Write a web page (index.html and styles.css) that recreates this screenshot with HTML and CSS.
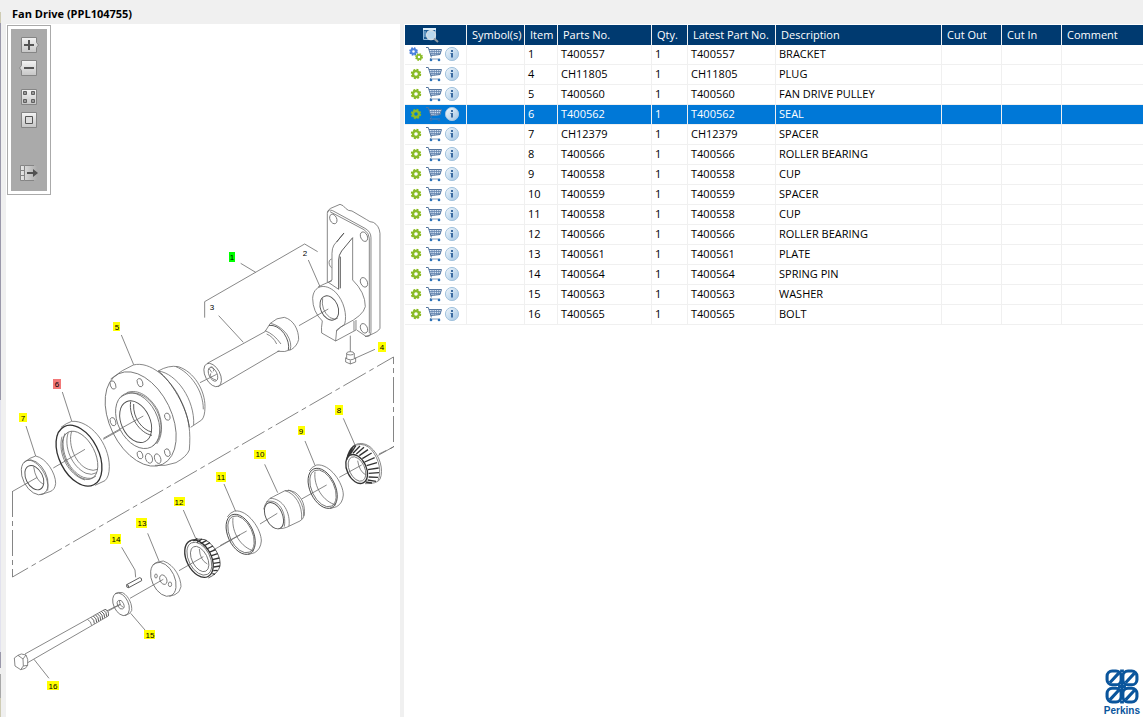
FILE: index.html
```html
<!DOCTYPE html>
<html lang="en">
<head>
<meta charset="utf-8">
<title>Fan Drive (PPL104755)</title>
<link rel="stylesheet" href="styles.css">
</head>
<body>
<svg class="defs" aria-hidden="true">
  <defs>
    <linearGradient id="tool" x1="0" y1="0" x2="0" y2="1"><stop offset="0" stop-color="#f4f4f4"/><stop offset="1" stop-color="#c6c6c6"/></linearGradient>
    <linearGradient id="fade" x1="0" y1="0" x2="1" y2="0"><stop offset="0" stop-color="#e6e6e6"/><stop offset="1" stop-color="#ababab"/></linearGradient>
    <linearGradient id="ball" x1="0" y1="0" x2="1" y2="1"><stop offset="0" stop-color="#f4f9fd"/><stop offset="1" stop-color="#9fc3e2"/></linearGradient>
  </defs>
  <symbol id="gear" viewBox="0 0 16 16">
    <circle cx="8" cy="8" r="4.2" fill="none" stroke="#86b817" stroke-width="2" stroke-dasharray="1.9 1.4"/>
    <circle cx="8" cy="8" r="3" fill="none" stroke="#8abb2a" stroke-width="2.4"/>
  </symbol>
  <symbol id="gears" viewBox="0 0 16 16">
    <circle cx="5.500" cy="5.500" r="3.300" fill="none" stroke="#3c74d6" stroke-width="2" stroke-dasharray="1.5 1.1"/>
    <circle cx="5.500" cy="5.500" r="2.300" fill="none" stroke="#4c82de" stroke-width="2"/>
    <circle cx="11" cy="11" r="3" fill="none" stroke="#86b817" stroke-width="1.8" stroke-dasharray="1.4 .96"/>
    <circle cx="11" cy="11" r="2.1" fill="none" stroke="#8abb2a" stroke-width="1.8"/>
  </symbol>
  <symbol id="cart" viewBox="0 0 16 16">
    <path d="M3 3.500h12.500l-1.500 5.500-9 1z" fill="#d5e2f2"/>
    <path d="M0 1.500h2.300l3 9.600M3 3.500h12.500l-1.500 5L4.800 9.500" fill="none" stroke="#54759f"/>
    <path d="M3.500 5.500h11.500M4 7.500h10.500M6 3.500v6M8.300 3.500v6M10.500 3.500v5.500M12.700 3.500v5M5.300 11.500l-1.300 1.500h10" fill="none" stroke="#6384ae" stroke-width=".8"/>
    <circle cx="5" cy="14" r="1.300" fill="#2d72b8"/><circle cx="13" cy="14" r="1.300" fill="#2d72b8"/>
  </symbol>
  <symbol id="info" viewBox="0 0 16 16">
    <circle cx="8" cy="8" r="6.600" fill="url(#ball)" stroke="#a3c3de" stroke-width="1"/>
    <path d="M7 4h2v2H7zM6.500 7H9v4.500H7V8h-.5z" fill="#3c6ca0"/>
  </symbol>
  <symbol id="ring" viewBox="250 210 130 155" overflow="visible">
    <g fill="none" stroke="#666" stroke-width="2.400">
      <ellipse cx="308" cy="295" rx="38" ry="64" transform="rotate(-25 308 295)" stroke="#444" stroke-width="2.600"/>
      <ellipse cx="309" cy="295" rx="34" ry="59" transform="rotate(-25 309 295)"/>
      <path d="M268 243Q275 230 290 225C330 220 370 280 370 315Q368 340 350 350L330 356M285 245C280 290 310 335 348 345"/>
    </g>
  </symbol>
</svg>

<header class="title"><h1>Fan Drive (PPL104755)</h1></header>
<main class="workspace">
  <section class="diagram" aria-label="Exploded diagram">
    <div class="toolbar" role="toolbar" aria-label="Diagram tools">
      <div class="tool-group">
        <button aria-label="Zoom in"><svg viewBox="0 0 20 16"><path d="M2.500.5h15v5l2 2.500-2 2.500v5h-15z" fill="url(#tool)" stroke="#858585"/><path d="M5 8h10M10 3v10" stroke="#555" stroke-width="2"/></svg></button>
        <button aria-label="Zoom out"><svg viewBox="0 0 20 16"><path d="M2.500.5h15v15h-15v-5L.5 8l2-2.500z" fill="url(#tool)" stroke="#858585"/><path d="M5 8h10" stroke="#555" stroke-width="2"/></svg></button>
      </div>
      <div class="tool-group">
        <button aria-label="Fit all"><svg viewBox="0 0 20 16"><path d="M2.500.5h15v15h-15z" fill="url(#tool)" stroke="#858585"/><path d="M4.500 2.500h3v3h-3zM12.500 2.500h3v3h-3zM4.500 10.500h3v3h-3zM12.500 10.500h3v3h-3z" fill="#999" stroke="#606060"/></svg></button>
        <button aria-label="Actual size"><svg viewBox="0 0 20 16"><path d="M2.500.5h15v15h-15z" fill="url(#tool)" stroke="#858585"/><path d="M6.500 4.500h7v7h-7z" fill="#ddd" stroke="#555"/></svg></button>
      </div>
      <div class="tool-group last">
        <button aria-label="Hide list"><svg viewBox="0 0 20 16"><path d="M2 1h16v14H2z" fill="url(#fade)"/><path d="M1.500.5h4v15h-4zM1.500 5.500h4M1.500 10.500h4M6 .5h9M6 15.500h9" fill="none" stroke="#858585"/><path d="M8 7h6V4l5 4-5 4V9H8z" fill="#505050"/></svg></button>
      </div>
    </div>
    <svg class="drawing" viewBox="6 24 394 693" role="img" aria-label="Fan drive parts">
      <g class="ink">
        <path class="phantom" d="M12.500 491V577L393.500 357V447L379 454"/>

        <!-- bracket, plug -->
        <g transform="translate(190 195) scale(.3333)">
          <path d="M44 368V320L344 147L383 170M152 205L197 232M355 195L390 275M86 362L160 442M327 392L415 342"/>
          <path d="M412 262V55Q414 43 422 40L450 28Q460 30 467 40Q474 48 486 48L530 74Q540 82 550 82Q568 92 570 115V400Q566 410 540 420L525 425M412 52Q416 42 428 47L525 100Q543 110 543 128V410Q543 427 528 424L500 405M420 50L522 104Q538 114 538 130V415"/>
          <ellipse cx="430" cy="72" rx="10" ry="15" transform="rotate(-25 430 72)"/>
          <ellipse cx="522" cy="125" rx="10" ry="15" transform="rotate(-25 522 125)"/>
          <ellipse cx="522" cy="262" rx="10" ry="15" transform="rotate(-25 522 262)"/>
          <ellipse cx="522" cy="400" rx="10" ry="15" transform="rotate(-25 522 400)"/>
          <path d="M425 192Q415 195 418 208Q420 216 425 218M462 114L432 150Q426 160 426 175V255L415 262L446 283M488 128V255Q526 292 526 335Q520 362 467 388M426 257Q400 268 384 276"/>
          <path class="bold" d="M462 114L440 141M488 128L455 168Q446 180 446 195V283M451 185V280"/>
          <path d="M397 378Q368 350 368 310C370 272 405 262 437 292C462 318 472 360 464 388L440 405L437 438L395 414Q393 400 397 378M437 438L498 405V375M492 378V407M467 388Q450 395 440 408"/>
          <ellipse class="bold" cx="418" cy="339" rx="26" ry="38" transform="rotate(-23 418 339)"/>
          <path d="M398 310Q392 345 420 368Q434 375 443 370"/>
          <path d="M481 422V470M470 475V490M493 475V490M467 488V501L481 507L497 501V489M467 489Q481 500 497 489M481 496V507M495 490L555 463"/>
          <ellipse cx="481" cy="475" rx="11" ry="5"/>
        </g>

        <!-- shaft and pulley -->
        <g transform="translate(90 310) scale(.3333)">
          <path d="M352 160L525 65M384 230L568 122M525 65L541 40Q560 22 583 22C612 30 626 60 626 88Q622 107 605 118Q585 128 562 124M541 40Q568 45 590 72Q608 100 600 121M525 62Q552 72 573 102M530 72Q550 80 560 102M330 218L380 193M94 75L131 164"/>
          <path class="bold" d="M537 46Q562 44 582 70Q600 98 595 120"/>
          <ellipse cx="368" cy="195" rx="22" ry="38" transform="rotate(-28 368 195)"/>
          <ellipse cx="369" cy="193" rx="12" ry="22" transform="rotate(-25 369 193)"/>
          <path d="M356 174L366 188M362 170Q375 172 370 184M362 190Q358 205 378 210"/>
          <ellipse cx="152" cy="327" rx="93" ry="151" transform="rotate(-26 152 327)"/>
          <path d="M62 207Q98 178 130 165C180 152 240 205 270 265C300 325 302 370 298 420Q290 440 258 458Q225 470 195 466M205 183Q235 165 265 170C312 185 345 240 345 290Q345 320 335 330L302 352M205 183C260 190 315 270 311 345M258 170C300 188 340 240 340 298"/>
          <path class="bold" d="M205 183C245 215 290 290 298 352"/>
          <ellipse cx="143" cy="332" rx="59" ry="89" transform="rotate(-27 143 332)"/>
          <path d="M92 262C120 240 160 245 190 285C222 330 220 385 188 408M110 248C145 235 180 260 203 300C220 340 218 380 200 402"/>
          <ellipse class="bold" cx="137" cy="335" rx="43" ry="66" transform="rotate(-25 137 335)"/>
          <path class="bold" d="M122 275C115 320 150 370 186 376M131 282C128 325 158 360 185 366"/>
          <path d="M40 385L160 318"/>
          <ellipse cx="69" cy="225" rx="8" ry="13" transform="rotate(-20 69 225)"/>
          <ellipse cx="150" cy="218" rx="8" ry="13" transform="rotate(-20 150 218)"/>
          <ellipse cx="69" cy="335" rx="8" ry="13" transform="rotate(-20 69 335)"/>
          <ellipse cx="232" cy="320" rx="8" ry="11" transform="rotate(-20 232 320)"/>
          <ellipse cx="150" cy="435" rx="8" ry="12" transform="rotate(-20 150 435)"/>
          <ellipse cx="177" cy="445" rx="10" ry="15" transform="rotate(-20 177 445)"/>
          <ellipse cx="203" cy="446" rx="9" ry="15" transform="rotate(-20 203 446)"/>
          <ellipse cx="232" cy="428" rx="8" ry="12" transform="rotate(-20 232 428)"/>
        </g>

        <!-- seal and spacer -->
        <g transform="translate(0 370) scale(.3333)">
          <path d="M187 66L215 153M78 168L107 258M160 294L255 238M310 208L360 180M38 364L112 322"/>
          <ellipse class="heavy" cx="237" cy="257" rx="59" ry="98" transform="rotate(-27 237 257)"/>
          <ellipse cx="240" cy="256" rx="45" ry="78" transform="rotate(-27 240 256)"/>
          <path d="M183 172Q198 160 215 154C270 150 328 220 328 290Q328 320 315 332L285 346"/>
          <path d="M195 190C178 230 200 300 250 322Q275 330 288 318M205 187C190 230 215 290 258 310Q275 317 290 308M215 184C202 225 228 285 265 298Q280 304 293 298M186 200C172 250 205 315 255 330"/>
          <ellipse cx="104" cy="322" rx="35" ry="56" transform="rotate(-27 104 322)"/>
          <ellipse class="bold" cx="103" cy="323" rx="25" ry="39" transform="rotate(-27 103 323)"/>
          <path d="M72 278Q90 262 107 258C140 265 167 310 167 340Q165 360 150 365L122 374M80 272C105 262 150 315 143 362M101 290Q106 330 130 343"/>
        </g>

        <!-- bearing 8, cups 9 and 11, spacer 10 -->
        <g transform="translate(220 390) scale(.3333)">
          <path d="M370 85L405 165M358 262L425 225M475 196L521 170M255 153L285 226M245 327L320 285M134 223L173 308M120 402L172 370M12 282L47 364M0 467L80 423"/>
          <ellipse class="heavy" cx="410" cy="237" rx="29" ry="46" transform="rotate(-25 410 237)"/>
          <ellipse cx="411" cy="237" rx="23" ry="39" transform="rotate(-25 411 237)"/>
          <path d="M402 166Q425 153 450 170C480 195 492 240 480 268Q470 282 435 281M410 165Q435 158 455 180C478 208 485 245 474 272M413 212Q418 245 438 255"/>
          <path class="heavy" d="M380 210Q385 180 404 166M384 202L400 168M390 194L408 166M399 190L420 168M409 192L432 172M418 197L444 179M427 206L455 189M434 216L464 203M440 227L471 218M444 239L476 234M446 250L477 248M446 261L474 262M443 270L468 274M437 276L456 279"/>
          <use href="#ring" x="250" y="210" width="130" height="155"/>
          <use href="#ring" x="4" y="348" width="130" height="155"/>
          <ellipse class="bold" cx="162" cy="377" rx="25" ry="42" transform="rotate(-25 162 377)"/>
          <path d="M131 358Q138 328 160 320L195 302Q210 298 225 307C250 325 255 350 253 375Q250 388 240 393L200 412Q190 416 178 416M140 335C175 325 200 365 193 410M150 325C190 325 212 370 207 408M195 302C225 310 248 345 245 388M204 300C232 308 253 345 251 378"/>
        </g>

        <!-- bearing 12, plate, pin, washer -->
        <g transform="translate(100 490) scale(.3333)">
          <path d="M250 60L287 145M237 242L310 200M340 180L420 135M143 130L177 213M90 325L190 268M65 172L105 240L107 262M92 370L135 420M20 363L60 343"/>
          <ellipse class="heavy" cx="297" cy="206" rx="37" ry="60" transform="rotate(-27 297 206)"/>
          <ellipse cx="298" cy="206" rx="32" ry="53" transform="rotate(-27 298 206)"/>
          <ellipse cx="299" cy="207" rx="23" ry="41" transform="rotate(-27 299 207)"/>
          <path d="M298 177Q300 210 322 222"/>
          <path class="bold" d="M262 158Q285 143 315 149C345 165 364 205 360 228Q355 250 325 264"/>
          <path class="heavy" d="M280 153L292 145M291 157L306 147M302 161L320 151M311 168L330 158M320 177L339 168M327 187L347 179M333 198L353 191M337 209L358 204M340 220L360 217M341 231L360 228M340 242L353 241M337 251L345 253"/>
          <ellipse cx="190" cy="268" rx="34" ry="54" transform="rotate(-25 190 268)"/>
          <path d="M158 225Q172 213 190 213C225 225 243 265 243 290Q240 308 225 314L208 319"/>
          <ellipse cx="190" cy="269" rx="10" ry="15" transform="rotate(-25 190 269)"/>
          <ellipse cx="168" cy="258" rx="4" ry="6"/><ellipse cx="210" cy="283" rx="5" ry="7"/>
          <path class="bold" d="M80 284L119 263Q126 263 125 272L86 293Q78 294 80 284Q87 284 86 293"/>
          <ellipse cx="63" cy="343" rx="22" ry="36" transform="rotate(-25 63 343)"/>
          <path d="M45 311Q55 305 68 308C88 320 97 345 95 362Q92 372 75 376"/>
          <ellipse cx="62" cy="344" rx="9" ry="14" transform="rotate(-25 62 344)"/>
          <path d="M58 333Q58 348 70 352"/>
        </g>

        <!-- bolt -->
        <g transform="translate(0 590) scale(.3333)">
          <path d="M75 192L262 88L315 58M83 218L275 107L325 78M262 88Q274 94 275 107M102 208L147 265M325 63L362 43M43 204L54 196L69 207L70 228L62 239L45 228ZM54 196L64 192L78 195L83 208V226L76 235L62 239M69 207L78 195M70 228L83 226"/>
          <path class="bold" d="M315 58Q328 62 325 78M310 60Q321 66 320 80M304 64Q315 70 314 83M298 67Q309 74 308 87M292 71Q303 78 302 90M286 74Q297 82 296 94M280 78Q291 86 290 97M273 82Q284 90 283 101"/>
        </g>
      </g>
      <g class="tags">
        <g class="green"><rect x="229" y="252" width="6" height="10"/><text x="232" y="260">1</text></g>
        <text x="305" y="256">2</text><text x="212" y="310">3</text>
        <g><rect x="378" y="342" width="8" height="10"/><text x="382" y="350">4</text></g>
        <g><rect x="113" y="322" width="7" height="9"/><text x="117" y="330">5</text></g>
        <g class="red"><rect x="53" y="379" width="8" height="10"/><text x="57" y="387">6</text></g>
        <g><rect x="19" y="413" width="8" height="9"/><text x="23" y="421">7</text></g>
        <g><rect x="335" y="405" width="8" height="10"/><text x="339" y="413">8</text></g>
        <g><rect x="298" y="426" width="7" height="9"/><text x="301" y="434">9</text></g>
        <g><rect x="254" y="450" width="12" height="9"/><text x="260" y="457">10</text></g>
        <g><rect x="216" y="472" width="10" height="10"/><text x="221" y="480">11</text></g>
        <g><rect x="174" y="497" width="11" height="9"/><text x="179" y="505">12</text></g>
        <g><rect x="136" y="518" width="11" height="10"/><text x="142" y="526">13</text></g>
        <g><rect x="110" y="534" width="11" height="10"/><text x="116" y="542">14</text></g>
        <g><rect x="144" y="630" width="11" height="9"/><text x="150" y="638">15</text></g>
        <g><rect x="47" y="681" width="12" height="9"/><text x="53" y="689">16</text></g>
      </g>
    </svg>
  </section>

  <section class="parts" aria-label="Parts list">
    <table>
      <colgroup><col class="c-tools"><col class="c-symbol"><col class="c-item"><col class="c-part"><col class="c-qty"><col class="c-latest"><col class="c-desc"><col class="c-cut"><col class="c-cut"><col></colgroup>
      <thead>
        <tr><th><button class="search" aria-label="Search"><svg viewBox="0 0 18 16"><path d="M1.500 1.500h12v11h-12z" fill="#1d5c94" stroke="#8fb9dc"/><path d="M1 1h13v2H1z" fill="#dcecf8"/><path d="M2 5h2M2 7h2M2 9h2" stroke="#9cc7e8"/><circle cx="9" cy="8" r="4.400" fill="#b9d8ee" stroke="#d3dde5" stroke-width="1.500"/><path d="M12 11.500l4 3.500" stroke="#8f9aa4" stroke-width="2"/></svg></button></th><th>Symbol(s)</th><th>Item</th><th>Parts No.</th><th>Qty.</th><th>Latest Part No.</th><th>Description</th><th>Cut Out</th><th>Cut In</th><th>Comment</th></tr>
      </thead>
      <tbody>
        <tr><td><div class="actions"><button aria-label="Assembly"><svg><use href="#gears"/></svg></button><button aria-label="Add to cart"><svg><use href="#cart"/></svg></button><button aria-label="Information"><svg><use href="#info"/></svg></button></div></td><td></td><td>1</td><td>T400557</td><td>1</td><td>T400557</td><td>BRACKET</td><td></td><td></td><td></td></tr>
        <tr><td><div class="actions"><button aria-label="Part"><svg><use href="#gear"/></svg></button><button aria-label="Add to cart"><svg><use href="#cart"/></svg></button><button aria-label="Information"><svg><use href="#info"/></svg></button></div></td><td></td><td>4</td><td>CH11805</td><td>1</td><td>CH11805</td><td>PLUG</td><td></td><td></td><td></td></tr>
        <tr><td><div class="actions"><button aria-label="Part"><svg><use href="#gear"/></svg></button><button aria-label="Add to cart"><svg><use href="#cart"/></svg></button><button aria-label="Information"><svg><use href="#info"/></svg></button></div></td><td></td><td>5</td><td>T400560</td><td>1</td><td>T400560</td><td>FAN DRIVE PULLEY</td><td></td><td></td><td></td></tr>
        <tr class="selected"><td><div class="actions"><button aria-label="Part"><svg><use href="#gear"/></svg></button><button aria-label="Add to cart"><svg><use href="#cart"/></svg></button><button aria-label="Information"><svg><use href="#info"/></svg></button></div></td><td></td><td>6</td><td>T400562</td><td>1</td><td>T400562</td><td>SEAL</td><td></td><td></td><td></td></tr>
        <tr><td><div class="actions"><button aria-label="Part"><svg><use href="#gear"/></svg></button><button aria-label="Add to cart"><svg><use href="#cart"/></svg></button><button aria-label="Information"><svg><use href="#info"/></svg></button></div></td><td></td><td>7</td><td>CH12379</td><td>1</td><td>CH12379</td><td>SPACER</td><td></td><td></td><td></td></tr>
        <tr><td><div class="actions"><button aria-label="Part"><svg><use href="#gear"/></svg></button><button aria-label="Add to cart"><svg><use href="#cart"/></svg></button><button aria-label="Information"><svg><use href="#info"/></svg></button></div></td><td></td><td>8</td><td>T400566</td><td>1</td><td>T400566</td><td>ROLLER BEARING</td><td></td><td></td><td></td></tr>
        <tr><td><div class="actions"><button aria-label="Part"><svg><use href="#gear"/></svg></button><button aria-label="Add to cart"><svg><use href="#cart"/></svg></button><button aria-label="Information"><svg><use href="#info"/></svg></button></div></td><td></td><td>9</td><td>T400558</td><td>1</td><td>T400558</td><td>CUP</td><td></td><td></td><td></td></tr>
        <tr><td><div class="actions"><button aria-label="Part"><svg><use href="#gear"/></svg></button><button aria-label="Add to cart"><svg><use href="#cart"/></svg></button><button aria-label="Information"><svg><use href="#info"/></svg></button></div></td><td></td><td>10</td><td>T400559</td><td>1</td><td>T400559</td><td>SPACER</td><td></td><td></td><td></td></tr>
        <tr><td><div class="actions"><button aria-label="Part"><svg><use href="#gear"/></svg></button><button aria-label="Add to cart"><svg><use href="#cart"/></svg></button><button aria-label="Information"><svg><use href="#info"/></svg></button></div></td><td></td><td>11</td><td>T400558</td><td>1</td><td>T400558</td><td>CUP</td><td></td><td></td><td></td></tr>
        <tr><td><div class="actions"><button aria-label="Part"><svg><use href="#gear"/></svg></button><button aria-label="Add to cart"><svg><use href="#cart"/></svg></button><button aria-label="Information"><svg><use href="#info"/></svg></button></div></td><td></td><td>12</td><td>T400566</td><td>1</td><td>T400566</td><td>ROLLER BEARING</td><td></td><td></td><td></td></tr>
        <tr><td><div class="actions"><button aria-label="Part"><svg><use href="#gear"/></svg></button><button aria-label="Add to cart"><svg><use href="#cart"/></svg></button><button aria-label="Information"><svg><use href="#info"/></svg></button></div></td><td></td><td>13</td><td>T400561</td><td>1</td><td>T400561</td><td>PLATE</td><td></td><td></td><td></td></tr>
        <tr><td><div class="actions"><button aria-label="Part"><svg><use href="#gear"/></svg></button><button aria-label="Add to cart"><svg><use href="#cart"/></svg></button><button aria-label="Information"><svg><use href="#info"/></svg></button></div></td><td></td><td>14</td><td>T400564</td><td>1</td><td>T400564</td><td>SPRING PIN</td><td></td><td></td><td></td></tr>
        <tr><td><div class="actions"><button aria-label="Part"><svg><use href="#gear"/></svg></button><button aria-label="Add to cart"><svg><use href="#cart"/></svg></button><button aria-label="Information"><svg><use href="#info"/></svg></button></div></td><td></td><td>15</td><td>T400563</td><td>1</td><td>T400563</td><td>WASHER</td><td></td><td></td><td></td></tr>
        <tr><td><div class="actions"><button aria-label="Part"><svg><use href="#gear"/></svg></button><button aria-label="Add to cart"><svg><use href="#cart"/></svg></button><button aria-label="Information"><svg><use href="#info"/></svg></button></div></td><td></td><td>16</td><td>T400565</td><td>1</td><td>T400565</td><td>BOLT</td><td></td><td></td><td></td></tr>
      </tbody>
    </table>
    <div class="brand">
      <svg viewBox="70 40 99 102" aria-hidden="true">
        <g fill="none" stroke="#0a559c" stroke-width="9">
          <rect x="76" y="46" width="41" height="40" rx="15"/><rect x="122" y="46" width="41" height="40" rx="15"/>
          <rect x="76" y="96" width="41" height="40" rx="15"/><rect x="122" y="96" width="41" height="40" rx="15"/>
          <path d="M84 80L110 52M130 80L156 52M84 130L110 102M130 130L156 102M108 91H131M119.500 76V106M114 46h11M114 136h11"/>
        </g>
      </svg>
      <span>Perkins</span>
    </div>
  </section>
</main>
</body>
</html>
```
FILE: styles.css
```css
* {
  box-sizing: border-box;
}

body {
  margin: 0;
  min-height: 100vh;
  display: flex;
  flex-direction: column;
  background:
    linear-gradient(#f0f0f0 12px, #cfccb4 12px 23px, #9a98aa 23px 400px, #e2e2ee 400px 652px, #9a98aa 652px 668px, #f0f0f0 668px 674px, #a8a8a8 674px 698px, #cfccb4 698px) 0 0 / 1px 100% no-repeat,
    #f0f0f0;
  color: #000;
  font-family: "Open Sans", "Noto Sans", sans-serif;
  font-size: 11px;
}

button {
  display: block;
  margin: 0;
  padding: 0;
  border: 0;
  background: none;
}

button svg {
  display: block;
}

.defs {
  position: absolute;
  width: 0;
  height: 0;
}

.title {
  height: 24px;
  padding: 6px 12px 0;
}

.title h1 {
  margin: 0;
  font-size: 11px;
  line-height: 16px;
}

.workspace {
  flex: 1;
  display: flex;
  gap: 4px;
  padding-left: 6px;
}

.diagram {
  position: relative;
  flex: 0 0 394px;
  background: #fff;
}

.drawing {
  display: block;
  width: 100%;
}

.toolbar {
  position: absolute;
  top: 1px;
  left: 1px;
  width: 44px;
  height: 170px;
  padding: 11px 8px 8px 11px;
  border: 1px solid #aaa;
  background: #aaa;
  box-shadow: inset 0 0 0 3px #fff;
}

.tool-group {
  display: flex;
  flex-direction: column;
  gap: 7px;
  margin-bottom: 13px;
}

.tool-group.last {
  margin-top: 37px;
}

.tool-group svg {
  width: 20px;
  height: 16px;
}

.ink {
  fill: none;
  stroke: #666;
}

.ink .phantom {
  stroke-width: 0.8;
  stroke-dasharray: 26 4 5 4;
}

.ink g {
  stroke: #6a6a6a;
  stroke-width: 2.4;
}

.ink .bold {
  stroke: #505050;
  stroke-width: 2.8;
}

.ink .heavy {
  stroke: #333;
  stroke-width: 4;
}

.tags {
  font: 8px "Liberation Sans", sans-serif;
  text-anchor: middle;
}

.tags rect {
  fill: #ff0;
}

.tags .green rect {
  fill: #0f0;
}

.tags .red rect {
  fill: #f27878;
}

.parts {
  flex: 1;
  min-width: 0;
  display: flex;
  flex-direction: column;
  padding: 1px 0 0 1px;
  background: #fff;
}

table {
  width: 100%;
  table-layout: fixed;
  border-collapse: separate;
  border-spacing: 0;
}

.c-tools { width: 62px; }
.c-symbol { width: 58px; }
.c-item { width: 33px; }
.c-part { width: 94px; }
.c-qty { width: 36px; }
.c-latest { width: 88px; }
.c-desc { width: 166px; }
.c-cut { width: 60px; }

th,
td {
  height: 20px;
  border-right: 1px solid #f0f0f0;
  text-align: left;
  line-height: 16px;
  white-space: nowrap;
}

th {
  padding: 0 0 0 5px;
  background: #003a70;
  color: #fff;
  font-weight: 400;
}

td {
  padding: 0 0 2px 3px;
  border-bottom: 1px solid #f0f0f0;
}

th:last-child,
td:last-child {
  border-right: 0;
}

.selected td {
  background: #0078d7;
  color: #fff;
}

.search {
  margin-left: 12px;
}

.search svg {
  width: 18px;
  height: 16px;
}

.actions {
  display: flex;
  gap: 2px;
}

.actions svg {
  width: 16px;
  height: 16px;
}

.brand {
  display: flex;
  flex-direction: column;
  align-items: center;
  align-self: flex-end;
  margin-top: auto;
  padding-right: 3px;
  color: #0a559c;
  font: bold 10px/13px "Liberation Sans", sans-serif;
}

.brand svg {
  width: 34px;
  height: 35px;
}
```
